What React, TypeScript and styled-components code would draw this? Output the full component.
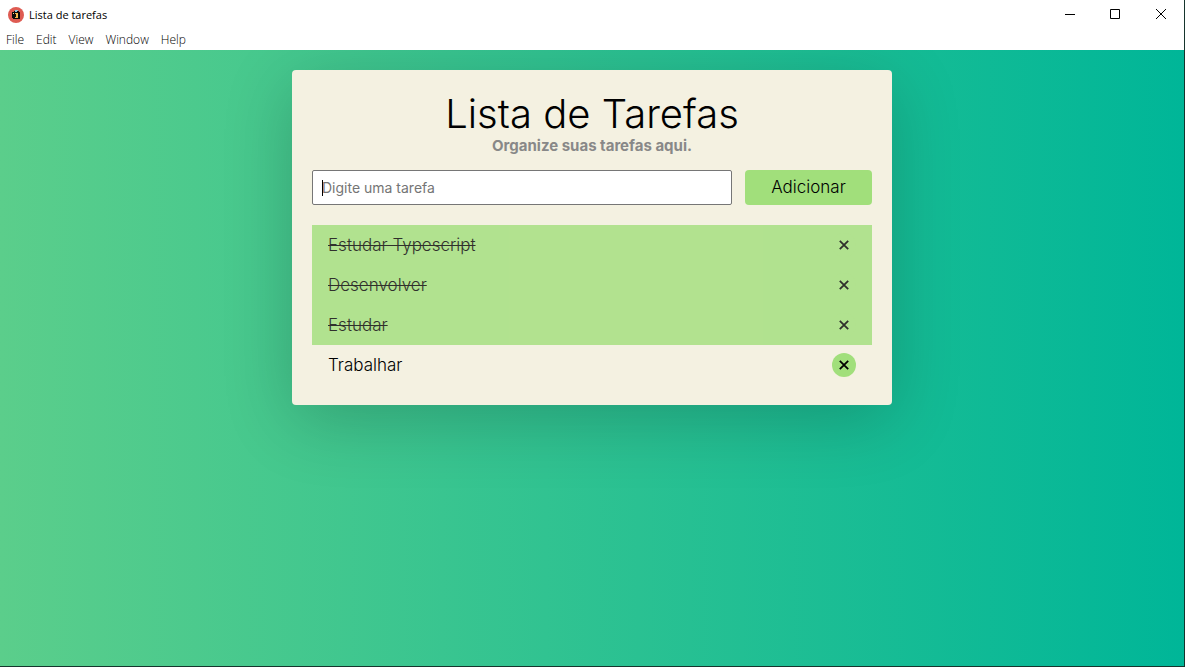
import React, { useState } from "react";
import styled, { createGlobalStyle } from "styled-components";

const GlobalStyle = createGlobalStyle`
  *, *::before, *::after { box-sizing: border-box; }
  body { margin: 0; font-family: Inter, "Liberation Sans", sans-serif; }
  h1, p, ul { margin: 0; padding: 0; }
  button, input { font: inherit; }
`;

const Window = styled.div`
  display: flex;
  flex-direction: column;
  min-height: 100vh;
  background: #fff;
  border: solid #16352d;
  border-width: 0 1px 1px 0;
`;

const TitleBar = styled.header`
  display: flex;
  align-items: center;
  height: 30px;
  padding-left: 8px;
  font: 12px/16px "Open Sans", "Noto Sans", sans-serif;
  color: #000;
`;

const AppName = styled.span`
  flex: 1;
  margin-left: 5px;
  font-size: 11px;
`;

const WindowButton = styled.button`
  display: grid;
  place-items: center;
  width: 46px;
  height: 30px;
  padding: 0;
  border: 0;
  background: transparent;
`;

const MenuBar = styled.nav`
  display: flex;
  gap: 12px;
  height: 20px;
  padding: 0 6px;
`;

const MenuItem = styled.button`
  padding: 0;
  border: 0;
  background: transparent;
  color: #000;
  font: 300 12px/20px "Open Sans", "Noto Sans", sans-serif;
`;

const Page = styled.main`
  flex: 1;
  padding: 20px;
  overflow: hidden;
  background: linear-gradient(to right, #5bce8b, #00b698);
`;

const Card = styled.section`
  max-width: 600px;
  margin: 0 auto;
  padding: 20px;
  border-radius: 4px;
  background: #f4f1e1;
  box-shadow: 0 15px 70px rgba(0, 0, 0, 0.2);
`;

const Title = styled.h1`
  font-size: 40px;
  line-height: 48px;
  font-weight: 300;
  text-align: center;
`;

const Subtitle = styled.p`
  color: #888;
  font-size: 15px;
  line-height: 16px;
  font-weight: 700;
  text-align: center;
`;

const Form = styled.form`
  display: flex;
  gap: 13px;
  margin: 16px 0 20px;
`;

const Field = styled.label`
  position: relative;
  flex: 1;
  display: flex;
`;

const Caret = styled.span`
  position: absolute;
  left: 10px;
  top: 10px;
  width: 1px;
  height: 16px;
  background: #000;
`;

const TaskInput = styled.input`
  width: 100%;
  height: 35px;
  padding: 0 9px;
  border: 1px solid #767676;
  border-radius: 2px;
  outline: none;
  background: #fff;
  font-size: 14px;
  &::placeholder { color: #757575; opacity: 1; }
`;

const AddButton = styled.button`
  width: 127px;
  height: 35px;
  padding: 0 0 2px;
  border: 0;
  border-radius: 4px;
  background: #a1df7b;
  color: #000;
  font-size: 17px;
  font-weight: 300;
`;

const TaskList = styled.ul`
  list-style: none;
`;

const TaskRow = styled.li<{ $done: boolean }>`
  display: flex;
  align-items: center;
  justify-content: space-between;
  height: 40px;
  padding: 0 16px;
  font-size: 17px;
  font-weight: 300;
  background: ${(p) => (p.$done ? "#a1df7b" : "transparent")};
  opacity: ${(p) => (p.$done ? 0.8 : 1)};
  text-decoration: ${(p) => (p.$done ? "line-through 1px" : "none")};
`;

const RemoveButton = styled.button`
  display: grid;
  place-items: center;
  width: 24px;
  height: 24px;
  padding: 0;
  border: 0;
  border-radius: 50%;
  background: #a1df7b;
`;

const Logo = () => (
  <svg width="16" height="16" viewBox="0 0 16 16" aria-hidden="true">
    <circle cx="8" cy="8" r="8" fill="#de5b52" />
    <path d="M4 5h2V4h5v1h1v7H5v-1H4z" fill="#0b0b0b" />
    <path d="M7 3h3v1H9v1H7z" fill="#8ec5dd" />
    <path d="M7 6h3v5H7z" fill="#f5b94f" />
    <path d="M7 7h1v3H7z" fill="#0b0b0b" />
    <path d="M5 6h1v1H5z" fill="#f5d9a0" />
  </svg>
);

const initialTasks = [
  { name: "Estudar Typescript", done: true },
  { name: "Desenvolver", done: true },
  { name: "Estudar", done: true },
  { name: "Trabalhar", done: false },
];

export default function App() {
  const [tasks, setTasks] = useState(initialTasks);
  const [text, setText] = useState("");

  const addTask = (event: React.FormEvent) => {
    event.preventDefault();
    if (!text.trim()) return;
    setTasks([...tasks, { name: text.trim(), done: false }]);
    setText("");
  };

  return (
    <>
      <GlobalStyle />
      <Window>
        <TitleBar>
          <Logo />
          <AppName>Lista de tarefas</AppName>
          <WindowButton aria-label="Minimize">
            <svg width="10" height="10" overflow="visible"><path d="M1 4.5h10" stroke="#000" /></svg>
          </WindowButton>
          <WindowButton aria-label="Maximize">
            <svg width="10" height="10" overflow="visible"><path d="M.5-.5h9v9h-9z" fill="none" stroke="#000" /></svg>
          </WindowButton>
          <WindowButton aria-label="Close">
            <svg width="10" height="10" overflow="visible"><path d="M0-1l10 10M10-1L0 9" stroke="#000" /></svg>
          </WindowButton>
        </TitleBar>
        <MenuBar>
          {["File", "Edit", "View", "Window", "Help"].map((item) => (
            <MenuItem key={item}>{item}</MenuItem>
          ))}
        </MenuBar>
        <Page>
          <Card>
            <Title>Lista de Tarefas</Title>
            <Subtitle>Organize suas tarefas aqui.</Subtitle>
            <Form onSubmit={addTask}>
              <Field>
                <TaskInput
                  aria-label="Digite uma tarefa"
                  placeholder="Digite uma tarefa"
                  value={text}
                  onChange={(e) => setText(e.target.value)}
                />
                {!text && <Caret />}
              </Field>
              <AddButton type="submit">Adicionar</AddButton>
            </Form>
            <TaskList>
              {tasks.map((task, i) => (
                <TaskRow key={i} $done={task.done}>
                  <span>{task.name}</span>
                  <RemoveButton
                    aria-label={`Remover ${task.name}`}
                    onClick={() => setTasks(tasks.filter((_, n) => n !== i))}
                  >
                    <svg width="10" height="10"><path d="M.8.8l8.4 8.4M9.2.8L.8 9.2" stroke="#000" strokeWidth="1.8" /></svg>
                  </RemoveButton>
                </TaskRow>
              ))}
            </TaskList>
          </Card>
        </Page>
      </Window>
    </>
  );
}
